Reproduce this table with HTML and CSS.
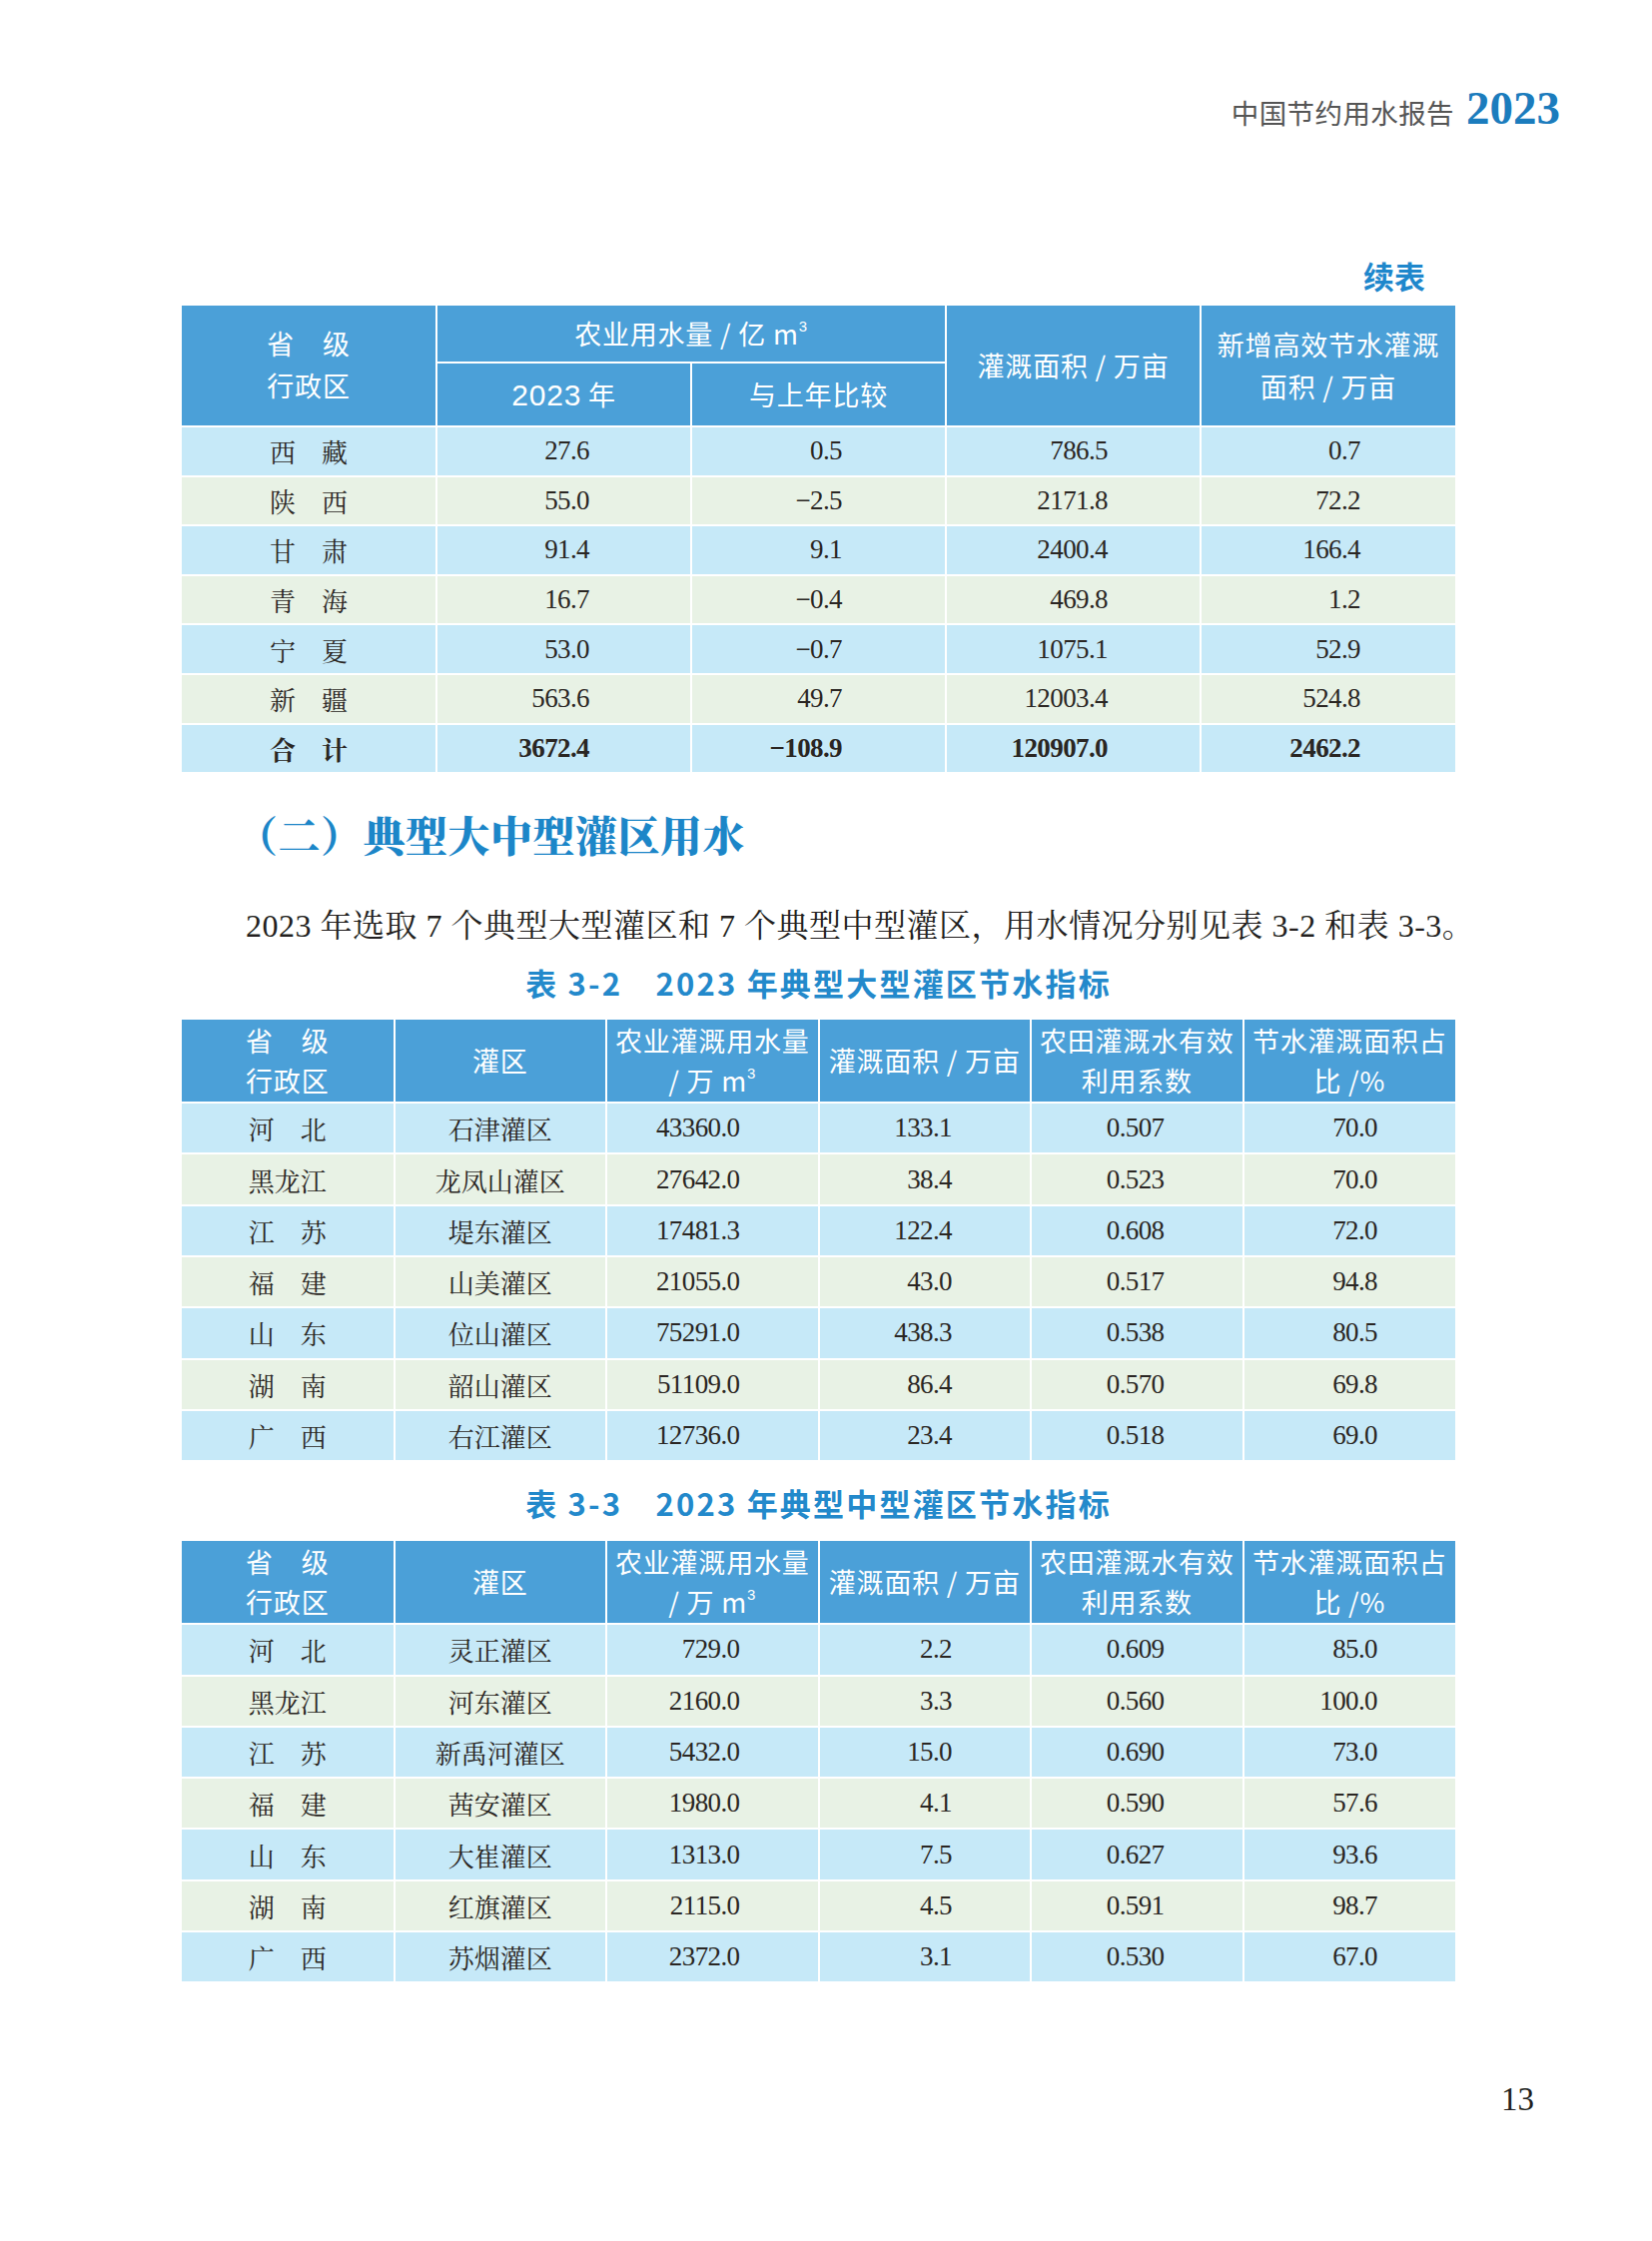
FILE: index.html
```html
<!DOCTYPE html>
<html lang="zh-CN">
<head>
<meta charset="utf-8">
<title>中国节约用水报告 2023</title>
<link rel="stylesheet" href="styles.css">
</head>
<body>
<div class="page">
  <header class="running-head">
    <span class="rh-title">中国节约用水报告</span>
    <span class="rh-year">2023</span>
  </header>

  <main class="content">
    <div class="cont-label">续表</div>
    <table class="data t1">
      <colgroup><col><col><col><col><col></colgroup>
      <thead>
        <tr class="h1">
          <th rowspan="2" class="prov-h">省　级<br>行政区</th>
          <th colspan="2">农业用水量 / 亿 m<sup>3</sup></th>
          <th rowspan="2">灌溉面积 / 万亩</th>
          <th rowspan="2">新增高效节水灌溉<br>面积 / 万亩</th>
        </tr>
        <tr class="h2">
          <th><span class="nar">2023</span> 年</th>
          <th>与上年比较</th>
        </tr>
      </thead>
      <tbody>
        <tr><td class="prov">西　藏</td><td class="num n1">27.6</td><td class="num n2">0.5</td><td class="num n3">786.5</td><td class="num n4">0.7</td></tr>
        <tr><td class="prov">陕　西</td><td class="num n1">55.0</td><td class="num n2">−2.5</td><td class="num n3">2171.8</td><td class="num n4">72.2</td></tr>
        <tr><td class="prov">甘　肃</td><td class="num n1">91.4</td><td class="num n2">9.1</td><td class="num n3">2400.4</td><td class="num n4">166.4</td></tr>
        <tr><td class="prov">青　海</td><td class="num n1">16.7</td><td class="num n2">−0.4</td><td class="num n3">469.8</td><td class="num n4">1.2</td></tr>
        <tr><td class="prov">宁　夏</td><td class="num n1">53.0</td><td class="num n2">−0.7</td><td class="num n3">1075.1</td><td class="num n4">52.9</td></tr>
        <tr><td class="prov">新　疆</td><td class="num n1">563.6</td><td class="num n2">49.7</td><td class="num n3">12003.4</td><td class="num n4">524.8</td></tr>
        <tr class="total"><td class="prov">合　计</td><td class="num n1">3672.4</td><td class="num n2">−108.9</td><td class="num n3">120907.0</td><td class="num n4">2462.2</td></tr>
      </tbody>
    </table>

    <h2 class="section">（二）典型大中型灌区用水</h2>

    <p class="para">2023&#8197;年选取&#8197;7&#8197;个典型大型灌区和&#8197;7&#8197;个典型中型灌区，用水情况分别见表&#8197;3-2&#8197;和表&#8197;3-3。</p>

    <div class="caption">表 3-2　2023 年典型大型灌区节水指标</div>
    <table class="data t2">
      <colgroup><col><col><col><col><col><col></colgroup>
      <thead>
        <tr>
          <th class="prov-h">省　级<br>行政区</th>
          <th>灌区</th>
          <th>农业灌溉用水量<br>/ 万 m<sup>3</sup></th>
          <th>灌溉面积 / 万亩</th>
          <th>农田灌溉水有效<br>利用系数</th>
          <th>节水灌溉面积占<br>比 /%</th>
        </tr>
      </thead>
      <tbody>
        <tr><td class="prov">河　北</td><td class="name">石津灌区</td><td class="num">43360.0</td><td class="num">133.1</td><td class="num">0.507</td><td class="num">70.0</td></tr>
        <tr><td class="prov">黑龙江</td><td class="name">龙凤山灌区</td><td class="num">27642.0</td><td class="num">38.4</td><td class="num">0.523</td><td class="num">70.0</td></tr>
        <tr><td class="prov">江　苏</td><td class="name">堤东灌区</td><td class="num">17481.3</td><td class="num">122.4</td><td class="num">0.608</td><td class="num">72.0</td></tr>
        <tr><td class="prov">福　建</td><td class="name">山美灌区</td><td class="num">21055.0</td><td class="num">43.0</td><td class="num">0.517</td><td class="num">94.8</td></tr>
        <tr><td class="prov">山　东</td><td class="name">位山灌区</td><td class="num">75291.0</td><td class="num">438.3</td><td class="num">0.538</td><td class="num">80.5</td></tr>
        <tr><td class="prov">湖　南</td><td class="name">韶山灌区</td><td class="num">51109.0</td><td class="num">86.4</td><td class="num">0.570</td><td class="num">69.8</td></tr>
        <tr><td class="prov">广　西</td><td class="name">右江灌区</td><td class="num">12736.0</td><td class="num">23.4</td><td class="num">0.518</td><td class="num">69.0</td></tr>
      </tbody>
    </table>

    <div class="caption">表 3-3　2023 年典型中型灌区节水指标</div>
    <table class="data t2">
      <colgroup><col><col><col><col><col><col></colgroup>
      <thead>
        <tr>
          <th class="prov-h">省　级<br>行政区</th>
          <th>灌区</th>
          <th>农业灌溉用水量<br>/ 万 m<sup>3</sup></th>
          <th>灌溉面积 / 万亩</th>
          <th>农田灌溉水有效<br>利用系数</th>
          <th>节水灌溉面积占<br>比 /%</th>
        </tr>
      </thead>
      <tbody>
        <tr><td class="prov">河　北</td><td class="name">灵正灌区</td><td class="num">729.0</td><td class="num">2.2</td><td class="num">0.609</td><td class="num">85.0</td></tr>
        <tr><td class="prov">黑龙江</td><td class="name">河东灌区</td><td class="num">2160.0</td><td class="num">3.3</td><td class="num">0.560</td><td class="num">100.0</td></tr>
        <tr><td class="prov">江　苏</td><td class="name">新禹河灌区</td><td class="num">5432.0</td><td class="num">15.0</td><td class="num">0.690</td><td class="num">73.0</td></tr>
        <tr><td class="prov">福　建</td><td class="name">茜安灌区</td><td class="num">1980.0</td><td class="num">4.1</td><td class="num">0.590</td><td class="num">57.6</td></tr>
        <tr><td class="prov">山　东</td><td class="name">大崔灌区</td><td class="num">1313.0</td><td class="num">7.5</td><td class="num">0.627</td><td class="num">93.6</td></tr>
        <tr><td class="prov">湖　南</td><td class="name">红旗灌区</td><td class="num">2115.0</td><td class="num">4.5</td><td class="num">0.591</td><td class="num">98.7</td></tr>
        <tr><td class="prov">广　西</td><td class="name">苏烟灌区</td><td class="num">2372.0</td><td class="num">3.1</td><td class="num">0.530</td><td class="num">67.0</td></tr>
      </tbody>
    </table>
  </main>

  <footer class="folio">13</footer>
</div>
</body>
</html>
```

FILE: styles.css
```css
html, body {
  margin: 0;
  padding: 0;
  background: #ffffff;
}

.page {
  width: 1654px;
  height: 2244px;
  position: relative;
  box-sizing: border-box;
  padding-top: 81px;
  font-family: "Liberation Serif", "Noto Serif CJK SC", "Noto Sans CJK SC", serif;
  color: #231f20;
}

/* running head */
.running-head {
  display: flex;
  justify-content: flex-end;
  align-items: baseline;
  padding-right: 92px;
  height: 50px;
}
.rh-title {
  font-family: "Noto Sans CJK SC", sans-serif;
  font-size: 27.5px;
  color: #555555;
  letter-spacing: 0.4px;
}
.rh-year {
  font-family: "Liberation Serif", serif;
  font-weight: bold;
  font-size: 47px;
  color: #1b7cbd;
  margin-left: 12px;
}

/* content column */
.content {
  margin-left: 182px;
  width: 1275px;
}

.cont-label {
  margin-top: 124px;
  text-align: right;
  padding-right: 30px;
  font-family: "Noto Sans CJK SC", sans-serif;
  font-weight: bold;
  font-size: 31px;
  line-height: 42px;
  color: #1f87cc;
  margin-bottom: 9px;
}

/* tables */
.data {
  width: 1275px;
  border-collapse: collapse;
  table-layout: fixed;
}
.data th, .data td {
  border: 2px solid #ffffff;
  padding: 0;
}
.data tr > :first-child { border-left: 0; }
.data tr > :last-child { border-right: 0; }
.data thead tr:first-child th { border-top: 0; }
.data tbody tr:last-child td { border-bottom: 0; }

.data th {
  background: #4ba0d8;
  color: #ffffff;
  font-family: "Noto Sans CJK SC", sans-serif;
  font-weight: normal;
  font-size: 27px;
  letter-spacing: 0.8px;
  line-height: 42px;
  text-align: center;
  vertical-align: middle;
}
.data th sup {
  font-family: "Liberation Sans Narrow", "Liberation Sans", sans-serif;
  font-size: 15px;
  line-height: 0;
  vertical-align: 13px;
}
.data .nar {
  font-family: "Liberation Sans Narrow", "Liberation Sans", sans-serif;
  font-size: 30px;
}
.t1 th.prov-h { padding-bottom: 2px; }

.data td {
  font-size: 27px;
  color: #2a2623;
  text-align: center;
  vertical-align: middle;
}
.data tbody tr:nth-child(odd) td { background: #c6e9f8; }
.data tbody tr:nth-child(even) td { background: #e8f2e5; }

.data td.num {
  text-align: right;
  letter-spacing: -0.6px;
}
.data td.prov, .data td.name {
  font-family: "Noto Serif CJK SC", "Noto Sans CJK SC", serif;
  font-size: 26px;
  font-weight: 400;
}

/* table 1 */
.t1 .h1 th { height: 56px; }
.t1 .h2 th { height: 62px; }
.t1 tbody td { height: 47.6px; }
.t1 td.n1 { padding-right: 101px; }
.t1 td.n2 { padding-right: 103px; }
.t1 td.n3 { padding-right: 92px; }
.t1 td.n4 { padding-right: 95px; }
.t1 tr.total td { font-weight: bold; }

/* table 2/3 */
.t2 thead th { height: 82px; line-height: 40px; }
.t2 tbody td { height: 49.3px; }
.t2 td.num { padding-right: 78px; }

/* section heading */
.section {
  margin: 34px 0 0 54px;
  font-family: "Noto Serif CJK SC", "Noto Sans CJK SC", sans-serif;
  font-weight: 900;
  font-size: 42px;
  line-height: 56px;
  color: #1c86c8;
  letter-spacing: 0.5px;
}

.para {
  margin: 41px 0 0 0;
  text-indent: 64px;
  font-size: 32px;
  line-height: 46px;
  letter-spacing: 0.5px;
  color: #231f20;
  white-space: nowrap;
}

.caption {
  text-align: center;
  font-family: "Noto Sans CJK SC", sans-serif;
  font-weight: bold;
  font-size: 31px;
  line-height: 44px;
  letter-spacing: 2.2px;
  color: #2389cb;
  margin: 12px 0 15px 0;
}
.t2 + .caption { margin-top: 21px; margin-bottom: 16px; }

.folio {
  position: absolute;
  right: 118px;
  top: 2084px;
  font-family: "Liberation Serif", serif;
  font-size: 33px;
  color: #231f20;
}
```
